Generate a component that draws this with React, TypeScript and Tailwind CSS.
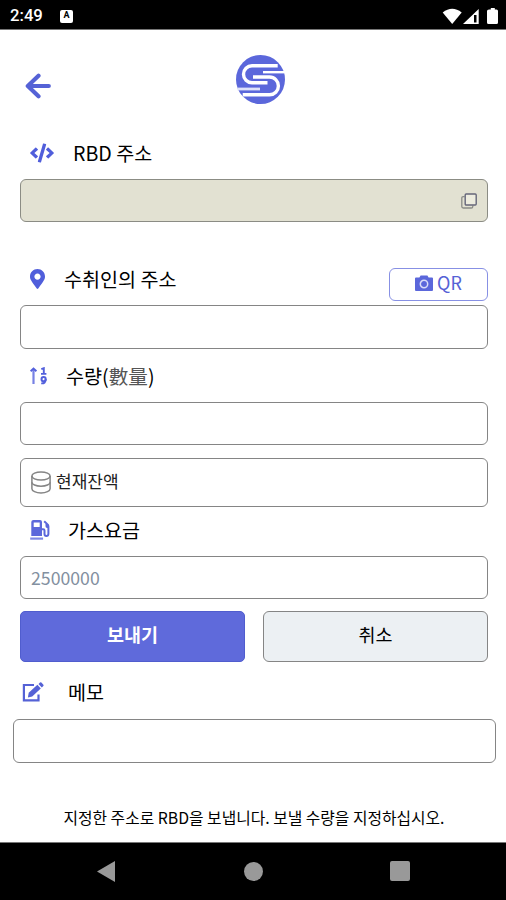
import type { ReactNode } from "react"
import { FaCode, FaMapMarkerAlt } from "react-icons/fa"

function Logo() {
  return (
    <svg viewBox="0 0 49 49" className="h-[49px] w-[49px]" fill="none">
      <circle cx="24.5" cy="24.5" r="24.5" fill="#5b67db" />
      <g stroke="#fff" strokeWidth="3.4">
        <path d="M41.7 10.8H16a8.5 8.5 0 0 0 0 17h15.5" />
        <path d="M17 22h16.5a8.9 8.9 0 0 1 0 17.8H6.7" />
        <path d="M27 17.2h21" strokeWidth="2.4" />
        <path d="M1.5 34H24" stroke="#dfe2fa" strokeWidth="2.8" />
      </g>
    </svg>
  )
}

function BackIcon() {
  return (
    <svg viewBox="0 0 26 26" className="h-[26px] w-[26px]" fill="none" stroke="#5562d6" strokeWidth="4.2" strokeLinecap="round" strokeLinejoin="round">
      <path d="M13.5 2.8 2.8 13l10.7 10.2M3.5 13h20.3" />
    </svg>
  )
}

function CopyIcon() {
  return (
    <svg viewBox="0 0 16 16" className="h-4 w-4" fill="none">
      <path d="M3.6 3.6H2.2Q.8 3.6.8 5v8.6q0 1.4 1.4 1.4h8q1.6 0 1.6-1.6v-1" stroke="#8b8c88" strokeWidth="1.3" />
      <rect x="4.2" y="1" width="11" height="11" rx="1" fill="#edecdf" stroke="#65667a" strokeWidth="1.4" />
    </svg>
  )
}

function CameraIcon() {
  return (
    <svg viewBox="0 0 18 16" className="h-4 w-[18px]">
      <path d="M5.6.5h6.8l1.2 2H17q1 0 1 1V15q0 1-1 1H1q-1 0-1-1V3.5q0-1 1-1h3.4z" fill="#5b67db" />
      <circle cx="9" cy="9" r="3.7" fill="#5b67db" stroke="#d9dcf8" strokeWidth="1.5" />
    </svg>
  )
}

function AmountIcon() {
  return (
    <svg viewBox="0 0 18 18" className="h-[18px] w-[18px]" fill="none" stroke="#5360dc">
      <path d="M3.5 17V2" strokeWidth="2.2" stroke="#7781e4" />
      <path d="M.6 4.2 3.500 1.500l2.900 2.700" strokeWidth="2" />
      <path d="M11.300 2.200 13.800 1.200v5.200M11 6.900h5.400" strokeWidth="1.900" />
      <circle cx="13.600" cy="12.200" r="2.100" strokeWidth="2" />
      <path d="M15.700 12q.2 4.700-4.500 4.400" strokeWidth="1.900" />
    </svg>
  )
}

function BalanceIcon() {
  return (
    <svg viewBox="0 0 20 23" className="h-[23px] w-5" fill="none" stroke="#858585" strokeWidth="1.5">
      <ellipse cx="10" cy="5" rx="9.1" ry="4.1" />
      <path d="M.9 5v12.700c0 2.300 4 4.200 9.100 4.200s9.100-1.900 9.100-4.200V5" />
      <path d="M.9 11.200c0 2.300 4 4 9.100 4s9.100-1.700 9.100-4" />
    </svg>
  )
}

function GasIcon() {
  return (
    <svg viewBox="0 0 20 20" className="h-5 w-5">
      <path d="M3.500 0h6.500q2 0 2 2v14h-10.700V2q0-2 2.200-2z" fill="#5b67db" />
      <path d="M3.700 2.500h6v4.500h-6z" fill="#fff" />
      <path d="M.2 18.600h12.900" stroke="#7e88e5" strokeWidth="2.200" />
      <path d="M12 9.200h1.200q1.300 0 1.300 1.300v3.500q0 1.900 1.900 1.900t2-1.900V6.500q0-1.200-.9-2.100L14.200 1.200" fill="none" stroke="#5b67db" strokeWidth="2" />
      <path d="M15.500 4h2.700l.8 4h-1.800q-1.700 0-1.700-1.800z" fill="#5b67db" />
    </svg>
  )
}

function MemoIcon() {
  return (
    <svg viewBox="0 0 23 20" className="h-5 w-[23px]">
      <path d="M12 3H1.900v15.300h14.600V12.500" fill="none" stroke="#5562d6" strokeWidth="2.200" />
      <path d="m6.700 10.700 8.700-7.900 3.400 3.700-8.600 8-4.300 1z" fill="#5562d6" />
      <path d="m16.500 1.900 1.500-1.400q.7-.6 1.400.1l2 2.100q.6.700-.1 1.300l-1.500 1.400z" fill="#5562d6" />
    </svg>
  )
}

function Label({ icon, gap, className, children }: { icon: ReactNode; gap: string; className: string; children: ReactNode }) {
  return (
    <div className={`flex items-center text-[19.6px] leading-6 ${className}`}>
      {icon}
      <span className={`${gap} whitespace-nowrap`}>{children}</span>
    </div>
  )
}

const field = "block w-full rounded-[6px] border border-[#858585] bg-white outline-none"

export default function App() {
  return (
    <div className="flex h-[900px] w-[506px] flex-col overflow-hidden bg-white font-['Noto_Sans_CJK_KR',sans-serif] text-black">
      <div className="flex h-[30px] shrink-0 items-center border-b border-[#777] bg-black pt-[3px] pr-[8px] pl-[10px] text-white">
        <span className="w-[34px] font-['Roboto',sans-serif] text-[16.700px] font-medium">2:49</span>
        <span className="ml-[16px] flex h-[13px] w-[13px] items-center justify-center rounded-[2px] bg-white font-['Roboto',sans-serif] text-[9px] font-bold text-black">A</span>
        <svg viewBox="0 0 56 17" className="ml-auto h-[17px] w-14" fill="#fff">
          <path d="M.7 4.500Q10.200-3 19.700 4.500L10.200 16z" />
          <path fillRule="evenodd" d="M36.700 1v15H21zM32 7v7.500h2.500V7z" />
          <path d="M47.500 1.500h1.300V0h4v1.500h1.700Q56 1.500 56 3v11.500q0 1.500-1.500 1.500h-8q-1.500 0-1.500-1.500V3q0-1.500 2-1.500z" />
        </svg>
      </div>

      <main className="flex h-[812px] shrink-0 flex-col pr-[18px] pl-5">
        <header className="grid h-[109px] grid-cols-[216px_49px_1fr] pt-[25px]">
          <button className="mt-[18px] ml-[5px] h-[26px] w-[26px]"><BackIcon /></button>
          <Logo />
        </header>

        <Label className="h-[28px] pl-[10px]" gap="ml-[19px]" icon={<FaCode className="h-[22px] w-[24px] text-[#505edb]" />}>RBD 주소</Label>
        <div className="mt-[12px] flex h-[43px] items-center justify-end rounded-[6px] border border-[#8b8c84] bg-[#e2e1d2] pr-[10px]">
          <CopyIcon />
        </div>

        <div className="mt-[45px] flex h-[34px] justify-between">
          <Label className="h-[24px] pl-[10px]" gap="ml-[19px]" icon={<FaMapMarkerAlt className="h-5 w-[15px] text-[#505edb]" />}>수취인의 주소</Label>
          <button className="mt-px flex h-[33px] w-[99px] items-center justify-center gap-[4px] rounded-[6px] border border-[#8790e4] pb-[3px] text-[18px] leading-6 text-[#5562d6]">
            <CameraIcon />
            <span className="-mt-[2px]">QR</span>
          </button>
        </div>
        <input className={`mt-[4px] h-[44px] ${field}`} />

        <Label className="mt-[14px] h-[26px] pl-[10px]" gap="ml-[18px]" icon={<AmountIcon />}>
          수량(<span className="text-[#555]">數量</span>)
        </Label>
        <input className={`mt-[13px] h-[43px] ${field}`} />
        <div className={`mt-[13px] h-[49px] ${field}`}>
          <div className="flex h-full items-center pl-[10px] text-[17px]">
            <BalanceIcon />
            <span className="-mt-[4px] ml-[5px] text-[#222]">현재잔액</span>
          </div>
        </div>

        <Label className="mt-[10px] h-[26px] pl-[10px]" gap="ml-[18px]" icon={<GasIcon />}>가스요금</Label>
        <input placeholder="2500000" className={`mt-[13px] h-[43px] pb-[2px] pl-[10px] text-[17.7px] placeholder:text-[#8390a0] ${field}`} />

        <div className="mt-[12px] flex h-[51px] gap-[18px]">
          <button className="w-[225px] rounded-[5px] border border-[#505dce] bg-[#5f6adb] pb-[3px] text-[18.5px] font-bold text-white">보내기</button>
          <button className="w-[225px] rounded-[6px] border border-[#858585] bg-[#ecf0f3] pb-[3px] text-[18.5px]">취소</button>
        </div>

        <Label className="mt-[17px] h-[26px] pl-[2px]" gap="ml-[23px]" icon={<MemoIcon />}>메모</Label>
        <div className="-mx-[7px] mt-[14px] w-[483px]">
          <input className={`h-[44px] ${field}`} />
        </div>
        <p className="mt-[43px] text-center text-[15.8px] leading-6 whitespace-nowrap">지정한 주소로 RBD을 보냅니다. 보낼 수량을 지정하십시오.</p>
      </main>

      <nav className="flex h-[58px] shrink-0 items-center border-t border-[#777] bg-black pb-px pl-[97px]">
        <svg viewBox="0 0 18 21" className="h-[21px] w-[18px]" fill="#999"><path d="M0 10.500 18 0v21z" /></svg>
        <span className="ml-[129px] h-[19px] w-[19px] rounded-full bg-[#999]" />
        <span className="ml-[127px] h-[20px] w-[20px] rounded-[2px] bg-[#999]" />
      </nav>
    </div>
  )
}
